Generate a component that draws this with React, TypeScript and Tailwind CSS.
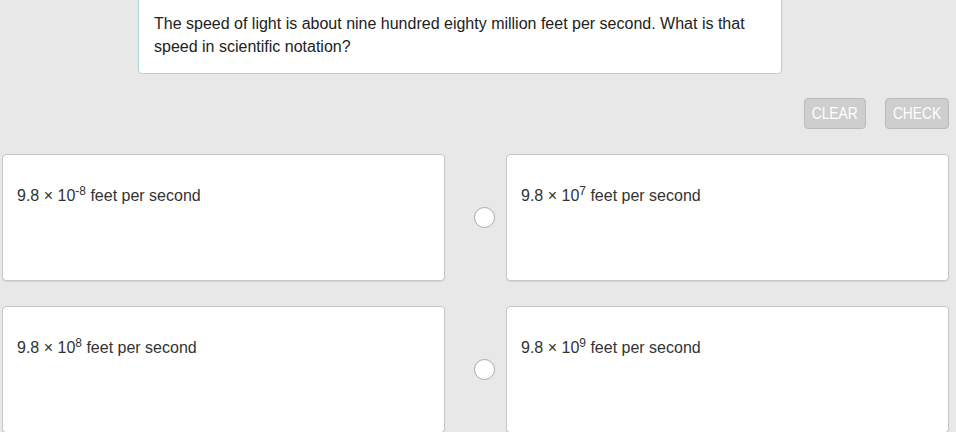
import React from 'react';

// Multiple-choice question: scientific notation

const options = [
    { exp: '-8' },
    { exp: '7' },
    { exp: '8' },
    { exp: '9' },
];

function Radio() {
    return (
        <span className="block w-[21px] h-[21px] shrink-0 rounded-full bg-white border border-[#a9a9a9]" />
    );
}

function OptionCard({ exp }: { exp: string }) {
    return (
        <div className="flex items-center">
            <Radio />
            <div className="ml-[11px] w-[443px] h-[127px] bg-white border border-[#c6c6c6] rounded-[4px] shadow-[0_1px_1px_rgba(0,0,0,0.08)] pl-[14px] pt-[29px] text-[16px] leading-[23px] text-[#333]">
                9.8 × 10<sup className="text-[12px]">{exp}</sup> feet per second
            </div>
        </div>
    );
}

function ActionButton({ label, width }: { label: string; width: string }) {
    return (
        <button className={`${width} h-[31px] rounded-[4px] bg-[#cecece] border border-[#bababa] text-white text-[16px] leading-none`}>
            <span className="inline-block scale-x-[0.86]">{label}</span>
        </button>
    );
}

export default function App() {
    return (
        <div className="w-[956px] h-[432px] overflow-hidden bg-[#e8e8e8] font-['Liberation_Sans',Arial,sans-serif]">
            {/* Question */}
            <div className="ml-[138px] w-[644px] mt-[-6px] bg-white border border-[#a8d6db] rounded-[4px] px-[15px] pt-[17px] pb-[15px] text-[16px] leading-[23px] text-[#222]">
                The speed of light is about nine hundred eighty million feet per second. What is that speed in scientific notation?
            </div>

            {/* Actions */}
            <div className="flex justify-end gap-[19px] pr-[7px] mt-[24px]">
                <ActionButton label="CLEAR" width="w-[62px]" />
                <ActionButton label="CHECK" width="w-[64px]" />
            </div>

            {/* Choices */}
            <div className="-ml-[30px] mt-[25px] grid grid-cols-[475px_475px] gap-x-[29px] gap-y-[25px]">
                {options.map((o, i) => (
                    <OptionCard key={i} exp={o.exp} />
                ))}
            </div>
        </div>
    );
}
